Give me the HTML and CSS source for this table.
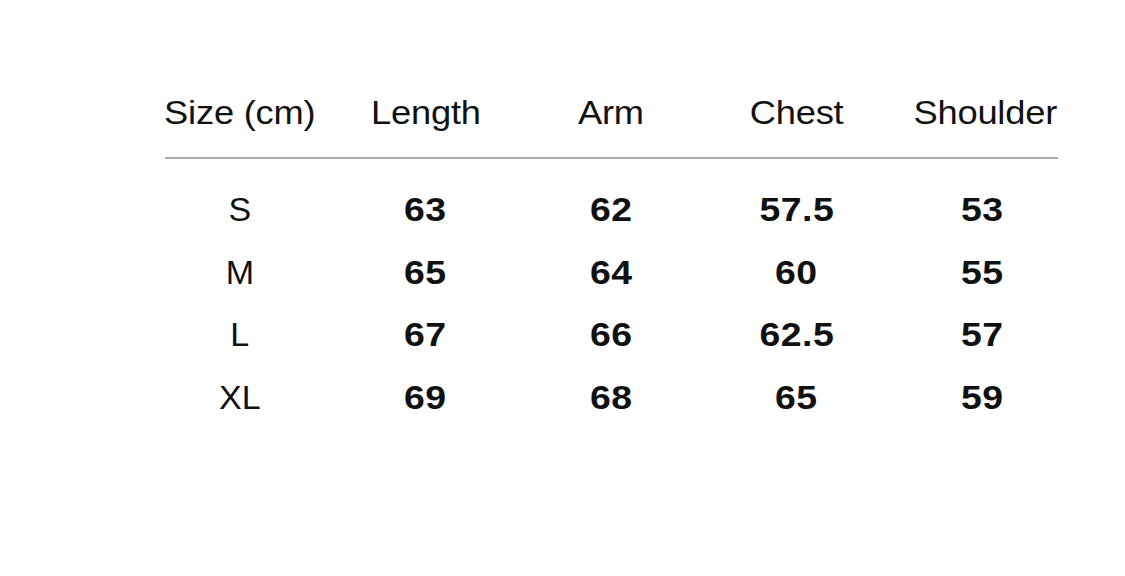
FILE: index.html
```html
<!DOCTYPE html>
<html>
<head>
<meta charset="utf-8">
<link rel="stylesheet" href="styles.css">
</head>
<body>
<div class="chart">
  <div class="row head">
    <div><span>Size (cm)</span></div><div><span>Length</span></div><div><span>Arm</span></div><div><span>Chest</span></div><div class="last"><span>Shoulder</span></div>
  </div>
  <div class="rule"></div>
  <div class="body">
    <div class="row"><div class="size"><span>S</span></div><div><span>63</span></div><div><span>62</span></div><div><span>57.5</span></div><div><span>53</span></div></div>
    <div class="row"><div class="size"><span>M</span></div><div><span>65</span></div><div><span>64</span></div><div><span>60</span></div><div><span>55</span></div></div>
    <div class="row"><div class="size"><span>L</span></div><div><span>67</span></div><div><span>66</span></div><div><span>62.5</span></div><div><span>57</span></div></div>
    <div class="row"><div class="size"><span>XL</span></div><div><span>69</span></div><div><span>68</span></div><div><span>65</span></div><div><span>59</span></div></div>
  </div>
</div>
</body>
</html>
```
FILE: styles.css
```css
html, body {
  margin: 0;
  background: #fff;
}
body {
  font-family: "Liberation Sans", Arial, Helvetica, sans-serif;
  color: #111;
}
.chart {
  margin-left: 147px;
  width: 928px;
  padding-top: 93px;
}
.row {
  display: grid;
  grid-template-columns: repeat(5, 1fr);
  text-align: center;
  font-size: 33px;
}
.row span {
  display: inline-block;
  transform: scaleX(1.1);
}
.head {
  height: 40px;
  line-height: 40px;
  letter-spacing: -0.2px;
}
.head .last {
  padding-left: 6px;
}
.rule {
  height: 2px;
  background: #ababab;
  margin: 24px 17px 0 18px;
}
.body {
  padding-top: 19px;
}
.body .row {
  height: 62.7px;
  line-height: 62.7px;
  font-weight: bold;
  font-size: 34px;
  letter-spacing: 0.4px;
}
.body .row .size {
  font-weight: normal;
  font-size: 34px;
  letter-spacing: 0;
}
.body .row .size span {
  transform: none;
}
```
